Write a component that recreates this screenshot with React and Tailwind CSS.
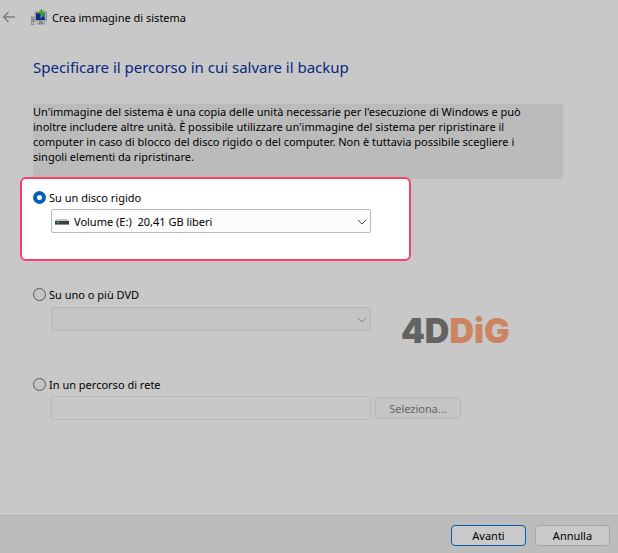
import { useState } from "react";

function BackupIcon() {
  return (
    <svg className="w-4 h-4" viewBox="0 0 16 16" aria-hidden="true">
      <rect x="4" y="3" width="11.500" height="9" fill="#a9afb3" stroke="#8b9297" />
      <rect x="5" y="4" width="9" height="7" fill="#0d2795" />
      <path d="M11 4H14v7z" fill="#3c62ba" />
      <path d="M8 12h4v2h2v1.500H6V14h2z" fill="#858b8f" />
      <rect x="0.500" y="8" width="2.500" height="7.500" fill="#b4babc" stroke="#8b9194" />
      <path d="M1 10h1.500M1 12h1.500" stroke="#5b6165" />
      <path d="M6.500 4.500 10.500 0 14.500 4.500h-2C12.500 7 11.500 8.500 8.500 9.500 9.500 8 9.500 6.500 9.500 4.500z" fill="#43a62b" />
    </svg>
  );
}

function DriveIcon() {
  return (
    <svg className="w-[14px] h-[6px]" viewBox="0 0 14 6" aria-hidden="true">
      <path d="M2 0h10l2 2H0z" fill="#c4c4c4" />
      <path d="M0 2h14v3H0z" fill="#404040" />
      <path d="M0 5h14v1H0z" fill="#8d8d8d" />
      <path d="M2 3h2v1H2z" fill="#37d83b" />
    </svg>
  );
}

function Chevron({ className }) {
  return (
    <svg className={`pointer-events-none absolute right-1 top-[9px] w-[10px] h-2 ${className}`} viewBox="0 0 10 8" fill="none" stroke="currentColor" aria-hidden="true">
      <path d="M1 2l4 4 4-4" />
    </svg>
  );
}

function RadioOption({ value, label, target, onChange }) {
  return (
    <label className="flex items-center gap-[3px] h-4">
      <input
        type="radio"
        name="target"
        value={value}
        checked={target === value}
        onChange={() => onChange(value)}
        className="appearance-none w-[13px] h-[13px] rounded-full border border-[#555555] bg-[#c3c3c3] checked:border-4 checked:border-[#0560b6] checked:bg-white"
      />
      <span>{label}</span>
    </label>
  );
}

export default function App() {
  const [target, setTarget] = useState("disk");

  return (
    <div className="flex flex-col min-h-screen bg-[#c8c8c8] text-black text-[11px] leading-[15px] font-['Noto_Sans',sans-serif]">
      {/* Title bar */}
      <header className="flex items-center h-[34px] pl-[3px]">
        <button aria-label="Indietro" className="text-[#7c7c7c]">
          <svg className="w-3 h-3" viewBox="0 0 12 12" fill="none" stroke="currentColor" strokeWidth="1.500">
            <path d="M12 6H1M5.500 1L.700 6l4.800 5" />
          </svg>
        </button>
        <div className="flex items-center gap-[5px] ml-4">
          <BackupIcon />
          <span>Crea immagine di sistema</span>
        </div>
      </header>

      <main className="flex-1 px-[33px] pt-[21px]">
        <h1 className="text-[15px] leading-6 text-[#06277f]">
          Specificare il percorso in cui salvare il backup
        </h1>

        <p className="mt-[25px] max-w-[530px] h-[75px] pr-7 bg-[#bbbbbb]">
          Un'immagine del sistema è una copia delle unità necessarie per l'esecuzione di Windows e può
          inoltre includere altre unità. È possibile utilizzare un'immagine del sistema per ripristinare il
          computer in caso di blocco del disco rigido o del computer. Non è tuttavia possibile scegliere i
          singoli elementi da ripristinare.
        </p>

        {/* Hard disk */}
        <section className="relative -ml-[13px] -mt-0.5 max-w-[391px] h-[84px] rounded-md border-2 border-[#f84068] bg-white pl-[11px] pr-[10px] pt-[10px]">
          <RadioOption value="disk" label="Su un disco rigido" target={target} onChange={setTarget} />
          <div className="relative mt-1 ml-[18px] max-w-[320px]">
            <select
              aria-label="Disco rigido"
              className="block appearance-none w-full h-6 pl-[22px] pr-5 rounded-xs border border-[#bababa] bg-[#fcfcfc]"
            >
              <option>Volume (E:)&nbsp; 20,41 GB liberi</option>
            </select>
            <span className="pointer-events-none absolute left-1 top-[10px] flex">
              <DriveIcon />
            </span>
            <Chevron className="text-[#444444]" />
          </div>
        </section>

        {/* DVD */}
        <section className="flex items-start gap-[30px] mt-[25px]">
          <div className="w-[338px]">
            <RadioOption value="dvd" label="Su uno o più DVD" target={target} onChange={setTarget} />
            <div className="relative mt-[5px] ml-[18px]">
              <select
                aria-label="Unità DVD"
                disabled
                className="block appearance-none w-full h-6 rounded-xs border border-[#b7b7b7] bg-[#c4c4c4] opacity-100"
              />
              <Chevron className="text-[#828282]" />
            </div>
          </div>
          <div className="pt-[29px] text-[34px] leading-8 font-black font-['Inter',sans-serif] text-[#636363]">
            4D<span className="text-[#cc8560]">DiG</span>
          </div>
        </section>

        {/* Network path */}
        <section className="mt-[29px]">
          <RadioOption value="network" label="In un percorso di rete" target={target} onChange={setTarget} />
          <div className="flex items-center gap-1 mt-1 ml-[18px]">
            <input
              type="text"
              aria-label="Percorso di rete"
              disabled
              className="w-[320px] h-6 px-1 rounded-xs border border-[#b9b9b9] bg-[#c8c8c8]"
            />
            <button disabled className="w-[86px] h-[22px] rounded border border-[#b4b4b4] bg-[#c5c5c5] text-[#666666]">
              Seleziona...
            </button>
          </div>
        </section>
      </main>

      <footer className="flex justify-end gap-[9px] border-t border-[#adadad] bg-[#bcbcbc] pt-[9px] pb-[7px] pr-2">
        <button className="w-[75px] h-[21px] rounded border border-[#075ca7] bg-[#c9c9c9]">Avanti</button>
        <button className="w-[75px] h-[21px] rounded border border-[#a5a5a5] bg-[#c9c9c9]">Annulla</button>
      </footer>
    </div>
  );
}
